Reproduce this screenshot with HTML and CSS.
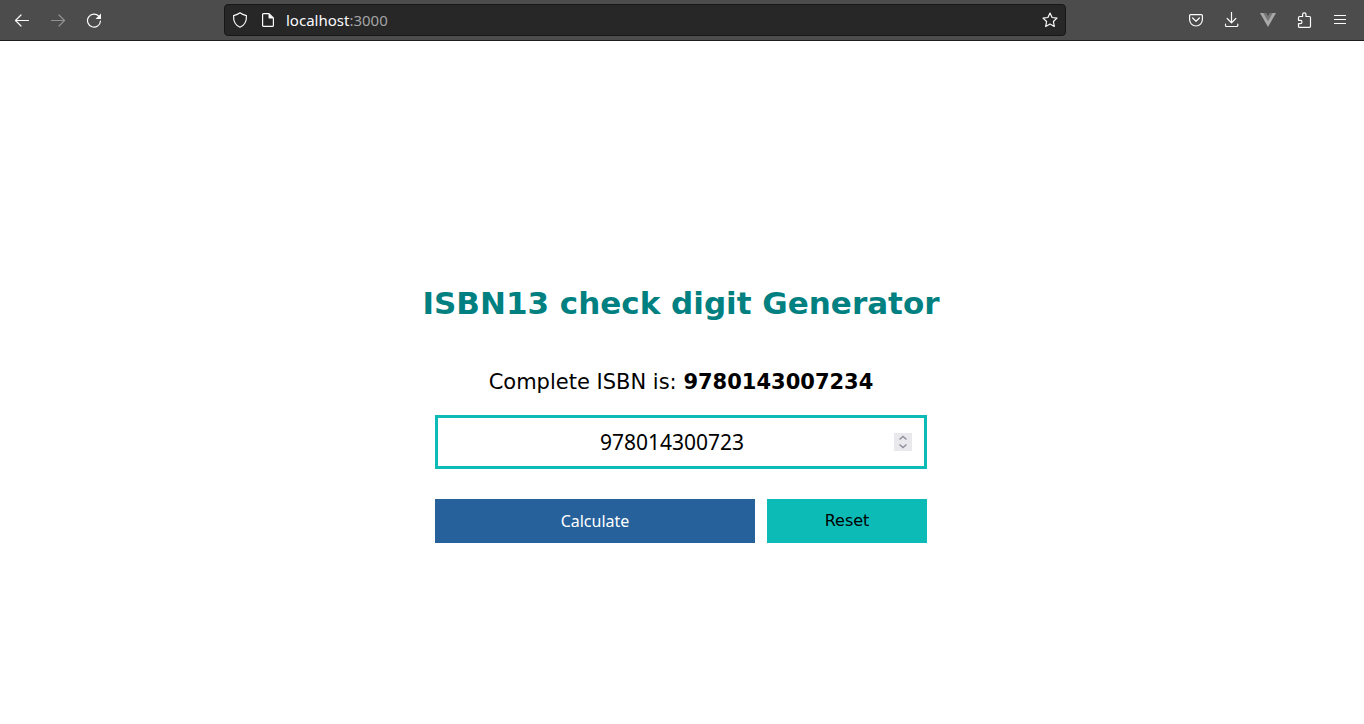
FILE: index.html
```html
<!DOCTYPE html>
<html lang="en">
<head>
<meta charset="utf-8">
<title>ISBN13 check digit Generator</title>
<link rel="stylesheet" href="styles.css">
</head>
<body>
<header class="toolbar">
  <nav class="tools" aria-label="Navigation">
    <button class="tool" type="button" aria-label="Back"><svg class="icon" viewBox="0 0 16 16"><path d="M14.500 8.500H1.500M7 3L1.500 8.500L7 14"/></svg></button>
    <button class="tool" type="button" aria-label="Forward" disabled><svg class="icon" viewBox="0 0 16 16"><path d="M1.500 8.500H14.500M9 3L14.500 8.500L9 14"/></svg></button>
    <button class="tool" type="button" aria-label="Reload"><svg class="icon" viewBox="0 0 16 16"><path d="M12.800 4.200A6.500 6.500 0 1 0 14.500 9"/><path class="solid" d="M15 1.500V7H9.500Z"/></svg></button>
  </nav>
  <div class="address">
    <svg class="icon" viewBox="0 0 16 16"><path d="M8 .8C6.200 2.200 4 3 1.600 3.600C1.300 8.800 3.300 13.200 8 15.200C12.700 13.200 14.700 8.800 14.400 3.600C12 3 9.800 2.200 8 .8Z"/></svg>
    <svg class="icon" viewBox="0 0 16 16"><path d="M3.600 1.600H9L13.400 6V13.400Q13.400 14.400 12.400 14.400H3.600Q2.600 14.400 2.600 13.400V2.600Q2.600 1.600 3.600 1.600Z"/><path class="solid" d="M8.500 1.300L13.700 6.500H9.500Q8.500 6.500 8.500 5.500Z"/></svg>
    <span class="url">localhost<span class="port">:3000</span></span>
    <button class="star" type="button" aria-label="Bookmark"><svg class="icon" viewBox="0 0 16 16"><path d="M8 1.100L10.100 5.500L15 6.100L11.400 9.500L12.300 14.500L8 12.100L3.700 14.500L4.600 9.500L1 6.100L5.900 5.500Z"/></svg></button>
  </div>
  <div class="tools end">
    <button class="tool" type="button" aria-label="Save to Pocket"><svg class="icon" viewBox="0 0 16 16"><path d="M2.600 2.600H13.400Q14.400 2.600 14.400 3.600V7.500A6.400 6.500 0 0 1 1.600 7.500V3.600Q1.600 2.600 2.600 2.600Z"/><path d="M4.600 6L8 9.300L11.400 6"/></svg></button>
    <button class="tool" type="button" aria-label="Downloads"><svg class="icon" viewBox="0 0 16 16"><path d="M7.500 .5V10.500M3.200 6.500L7.500 10.800L11.800 6.500M1.500 12V13.500Q1.500 14.500 2.500 14.500H12.800Q13.800 14.500 13.800 13.500V12"/></svg></button>
    <button class="tool" type="button" aria-label="Vue devtools"><svg class="icon vue" viewBox="0 0 16 16"><path class="vue-outer" d="M0 1H16L8 15Z"/><path class="vue-inner" d="M3.200 1H12.800L8 9.300Z"/><path class="vue-gap" d="M6.200 1H9.800L8 4Z"/></svg></button>
    <button class="tool" type="button" aria-label="Extensions"><svg class="icon" viewBox="0 0 16 16"><path d="M3.500 4.500H6.600V2.600A1.700 1.700 0 0 1 10 2.600V4.500H13.500Q14.500 4.500 14.500 5.500V14.300Q14.500 15.300 13.500 15.300H3.500Q2.500 15.300 2.500 14.300V11.700H4.300A1.700 1.700 0 0 0 4.300 8.300H2.500V5.500Q2.500 4.500 3.500 4.500Z"/></svg></button>
    <button class="tool" type="button" aria-label="Menu"><svg class="icon" viewBox="0 0 16 16"><path d="M2.500 3.500H13.500M2.500 7.500H13.500M2.500 11.500H13.500"/></svg></button>
  </div>
</header>
<main class="page">
  <h1 class="title">ISBN13 check digit Generator</h1>
  <form class="form">
    <label class="result" for="isbn">Complete ISBN is: <strong>9780143007234</strong></label>
    <div class="field">
      <input class="number" id="isbn" type="text" inputmode="numeric" value="978014300723">
      <button class="spinner" type="button" aria-label="Change value"><svg class="arrows" viewBox="0 0 18 18"><path d="M5.500 6.500L9 3.500L12.500 6.500M5.500 11.500L9 14.500L12.500 11.500"/></svg></button>
    </div>
    <div class="actions">
      <button class="action calculate" type="button">Calculate</button>
      <button class="action reset" type="reset">Reset</button>
    </div>
  </form>
</main>
</body>
</html>
```

FILE: styles.css
```css
* {
  box-sizing: border-box;
}

body {
  display: flex;
  flex-direction: column;
  min-height: 100vh;
  margin: 0;
  background: #fff;
  color: #000;
  font-family: "DejaVu Sans", sans-serif;
}

button {
  margin: 0;
  padding: 0;
  border: 0;
  background: none;
  color: inherit;
}

.toolbar {
  display: grid;
  grid-template-columns: minmax(116px, 224fr) minmax(0, 842fr) minmax(190px, 298fr);
  align-items: center;
  height: 41px;
  border-bottom: 1px solid #1c1c1c;
  background: #4c4c4c;
  color: #fbfbfe;
}

.tools {
  display: flex;
  padding: 0 4px;
}

.end {
  justify-content: flex-end;
  padding: 0 6px;
}

.tool {
  display: grid;
  place-items: center;
  width: 36px;
  height: 32px;
}

.tool:disabled {
  opacity: 0.4;
}

.icon {
  display: block;
  flex: none;
  width: 16px;
  height: 16px;
  fill: none;
  stroke: currentColor;
  stroke-width: 1.2;
  stroke-linecap: round;
  stroke-linejoin: round;
}

.solid {
  fill: currentColor;
  stroke: none;
}

.vue {
  stroke: none;
}

.vue-outer {
  fill: #a9a9a9;
}

.vue-inner {
  fill: #777;
}

.vue-gap {
  fill: #4c4c4c;
}

.address {
  display: flex;
  align-items: center;
  gap: 12px;
  height: 32px;
  padding: 0 7px;
  border: 1px solid #171717;
  border-radius: 4px;
  background: #272727;
}

.url {
  flex: 1;
  margin-left: -2px;
  font: 15px/20px "Noto Sans", sans-serif;
}

.port {
  color: #a3a3a5;
}

.page {
  display: flex;
  flex: 1;
  flex-direction: column;
  align-items: center;
  justify-content: center;
  gap: 46px;
  padding: 60px 18px 0 16px;
}

.title {
  margin: 0;
  color: #008080;
  font-size: 31px;
  line-height: 40px;
  text-align: center;
}

.form {
  display: flex;
  flex-direction: column;
  width: 100%;
  max-width: 492px;
}

.result {
  margin-bottom: 20px;
  font-size: 21px;
  line-height: 26px;
  text-align: center;
}

.field {
  display: flex;
  align-items: center;
  height: 54px;
  margin-bottom: 30px;
  padding: 0 12px;
  border: 3px solid #0cbab6;
}

.number {
  flex: 1;
  min-width: 0;
  padding: 0;
  border: 0;
  outline: 0;
  background: none;
  color: #000;
  font: 21px/30px "Noto Sans", sans-serif;
  text-align: center;
}

.spinner {
  width: 18px;
  height: 18px;
  background: #e9e9ed;
}

.arrows {
  display: block;
  fill: none;
  stroke: #8f8f9d;
  stroke-width: 1.4;
}

.actions {
  display: grid;
  grid-template-columns: 2fr 1fr;
  gap: 12px;
}

.action {
  height: 44px;
  font-size: 16px;
}

.calculate {
  background: #26619c;
  color: #fff;
  font-family: "Noto Sans", sans-serif;
}

.reset {
  background: #0cbab6;
  font-family: "DejaVu Sans", sans-serif;
}
```
